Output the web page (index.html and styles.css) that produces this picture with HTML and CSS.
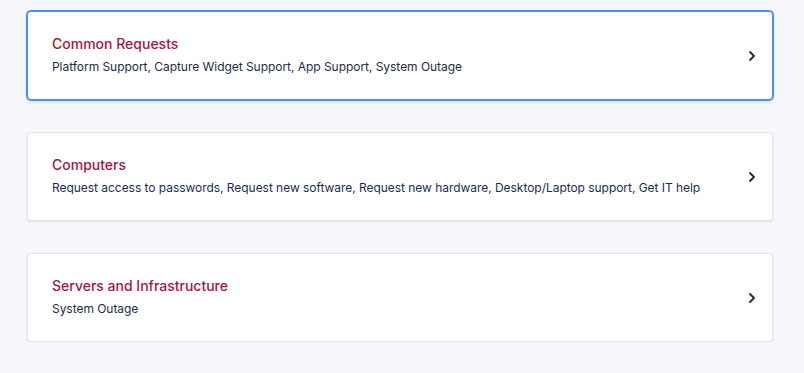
FILE: index.html
```html
<!DOCTYPE html>
<html lang="en">
<head>
  <meta charset="UTF-8" />
  <title>Request Types</title>
  <link rel="stylesheet" href="styles.css">
</head>
<body>

<main class="request-list">
  <a class="request-card is-focused" href="#">
    <div class="request-text">
      <h2>Common Requests</h2>
      <p>Platform Support, Capture Widget Support, App Support, System Outage</p>
    </div>
    <svg class="chevron" width="8" height="12" viewBox="0 0 8 12"><path d="M2 2l4 4-4 4" fill="none" stroke="#1b2747" stroke-width="1.8" stroke-linecap="round" stroke-linejoin="round"/></svg>
  </a>

  <a class="request-card" href="#">
    <div class="request-text">
      <h2>Computers</h2>
      <p>Request access to passwords, Request new software, Request new hardware, Desktop/Laptop support, Get IT help</p>
    </div>
    <svg class="chevron" width="8" height="12" viewBox="0 0 8 12"><path d="M2 2l4 4-4 4" fill="none" stroke="#1b2747" stroke-width="1.8" stroke-linecap="round" stroke-linejoin="round"/></svg>
  </a>

  <a class="request-card" href="#">
    <div class="request-text">
      <h2>Servers and Infrastructure</h2>
      <p>System Outage</p>
    </div>
    <svg class="chevron" width="8" height="12" viewBox="0 0 8 12"><path d="M2 2l4 4-4 4" fill="none" stroke="#1b2747" stroke-width="1.8" stroke-linecap="round" stroke-linejoin="round"/></svg>
  </a>
</main>

</body>
</html>
```

FILE: styles.css
```css
body {
  margin: 0;
  padding: 0;
  background: #f7f8fb;
  font-family: Inter, 'Noto Sans', sans-serif;
}

.request-list {
  display: flex;
  flex-direction: column;
  gap: 32px;
  padding: 11px 31px 0 27px;
}

.request-card {
  display: flex;
  align-items: center;
  justify-content: space-between;
  height: 87px;
  padding: 0 16px 0 24px;
  background: #fff;
  border: 1px solid #e1e4ea;
  border-radius: 4px;
  box-shadow: 0 1px 2px rgba(30, 40, 70, 0.12);
  text-decoration: none;
}

.request-card.is-focused {
  border-color: #4a8ff0;
  box-shadow: 0 0 0 1px #4a8ff0, 0 2px 4px rgba(30, 40, 70, 0.12);
}

.request-text {
  margin-top: -2px;
}

.request-text h2 {
  margin: 0 0 7px;
  font-size: 14px;
  font-weight: 500;
  color: #a3173f;
}

.request-text p {
  margin: 0;
  font-size: 12px;
  letter-spacing: -0.04px;
  color: #1d2b4f;
}

.chevron {
  flex-shrink: 0;
}
```
